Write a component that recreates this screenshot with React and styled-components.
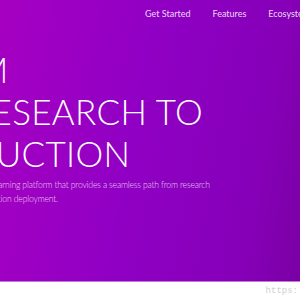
import React from "react";
import styled, { createGlobalStyle } from "styled-components";

const GlobalStyle = createGlobalStyle`
  body {
    margin: 0;
    background: #ffffff;
    font-family: Lato, "Open Sans", sans-serif;
  }
`;

const Page = styled.div`
  width: 300px;
  height: 300px;
  overflow: hidden;
`;

const Hero = styled.section`
  height: 281px;
  overflow: hidden;
  background: linear-gradient(100deg, #a600c2 0%, #9000c4 45%, #8600b8 82%, #7a00a4 100%);
  border-bottom: 1px solid #c27ad8;
  display: flex;
  flex-direction: column;
`;

const Nav = styled.nav`
  display: flex;
  gap: 22px;
  padding: 8px 0 0 145px;
  white-space: nowrap;
`;

const NavLink = styled.a`
  color: rgba(255, 255, 255, 0.85);
  font-family: Lato, sans-serif;
  font-size: 9px;
  line-height: 12px;
  text-decoration: none;
`;

const Content = styled.div`
  margin-top: 28px;
  white-space: nowrap;
`;

const Title = styled.h1`
  margin: 0;
  color: #ffffff;
  font-family: Lato, sans-serif;
  font-weight: 300;
  font-size: 35px;
  line-height: 42px;
  letter-spacing: 0.3px;
`;

const TitleLine = styled.span`
  display: block;
  margin-left: ${(p) => p.$indent}px;
`;

const Lead = styled.p`
  margin: 4px 0 0;
  color: rgba(255, 255, 255, 0.8);
  font-family: Lato, sans-serif;
  font-weight: 300;
  font-size: 8.7px;
  line-height: 14px;
  letter-spacing: -0.2px;
`;

const LeadLine = styled.span`
  display: block;
  margin-left: ${(p) => p.$indent}px;
`;

const Footer = styled.div`
  display: flex;
  justify-content: flex-end;
  padding: 4px 2px 0 0;
`;

const Watermark = styled.span`
  color: #cfcfcf;
  font-family: "Liberation Mono", monospace;
  font-size: 9px;
`;

export default function App() {
  return (
    <Page>
      <GlobalStyle />
      <Hero>
        <Nav>
          <NavLink href="#">Get Started</NavLink>
          <NavLink href="#">Features</NavLink>
          <NavLink href="#">Ecosystem</NavLink>
          <NavLink href="#">Blog</NavLink>
        </Nav>
        <Content>
          <Title>
            <TitleLine $indent={-93}>FROM</TitleLine>
            <TitleLine $indent={-30}>RESEARCH TO</TitleLine>
            <TitleLine $indent={-101}>PRODUCTION</TitleLine>
          </Title>
          <Lead>
            <LeadLine $indent={-86}>
              An open source deep learning platform that provides a seamless path from research
            </LeadLine>
            <LeadLine $indent={-80}>prototyping to production deployment.</LeadLine>
          </Lead>
        </Content>
      </Hero>
      <Footer>
        <Watermark>https:</Watermark>
      </Footer>
    </Page>
  );
}
